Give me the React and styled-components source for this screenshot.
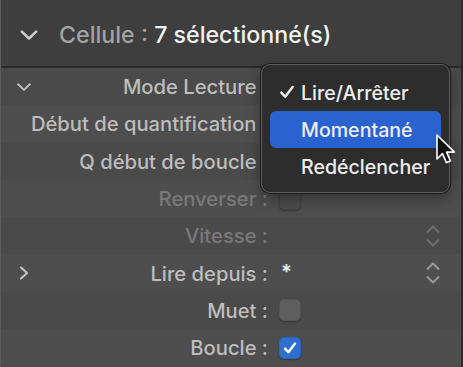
import React from 'react';
import styled, { createGlobalStyle } from 'styled-components';

const GlobalStyle = createGlobalStyle`
  html, body {
    margin: 0;
    padding: 0;
    background: #3e3e3e;
  }
  body {
    font-family: Inter, "Noto Sans", "Liberation Sans", sans-serif;
    -webkit-font-smoothing: antialiased;
  }
`;

const rows = [
  { label: 'Mode Lecture :', chevron: 'down' },
  { label: 'Début de quantification :' },
  { label: 'Q début de boucle :' },
  { label: 'Renverser :', dim: true, control: 'box-dim' },
  { label: 'Vitesse :', dim: true, stepper: true },
  { label: 'Lire depuis :', chevron: 'right', control: 'star', stepper: true },
  { label: 'Muet :', control: 'box' },
  { label: 'Boucle :', control: 'checked' },
];

const ChevronDown = ({ size = 20, color = '#c8c8c8', width = 2.4 }) => (
  <svg width={size} height={size} viewBox="0 0 20 20">
    <path d="M3.5 7 L10 13.2 L16.5 7" fill="none" stroke={color} strokeWidth={width} strokeLinecap="round" strokeLinejoin="round" />
  </svg>
);

const ChevronRight = () => (
  <svg width="14" height="16" viewBox="0 0 14 16">
    <path d="M4 2.5 L10 8 L4 13.5" fill="none" stroke="#c4c4c4" strokeWidth="2.1" strokeLinecap="round" strokeLinejoin="round" />
  </svg>
);

const Stepper = ({ dim }) => (
  <svg width="16" height="26" viewBox="0 0 16 26">
    <g fill="none" stroke={dim ? '#6f6f6f' : '#9a9a9a'} strokeWidth="1.9" strokeLinecap="round" strokeLinejoin="round">
      <path d="M2.5 9 L8 3.5 L13.5 9" />
      <path d="M2.5 17 L8 22.5 L13.5 17" />
    </g>
  </svg>
);

const Check = ({ color = '#fff', size = 16, width = 2.4 }) => (
  <svg width={size} height={size} viewBox="0 0 16 16">
    <path d="M3 8.6 L6.4 12.2 L13 3.6" fill="none" stroke={color} strokeWidth={width} strokeLinecap="round" strokeLinejoin="round" />
  </svg>
);

const Cursor = () => (
  <svg width="24" height="34" viewBox="0 0 24 34">
    <path d="M2 2 L2 26 L7.5 20.6 L11.4 29.6 L15.4 27.9 L11.6 19.1 L19.4 19.1 Z"
      fill="#111" stroke="#fff" strokeWidth="1.6" strokeLinejoin="round" />
  </svg>
);

function Control({ type }) {
  if (type === 'box-dim') return <Box dim />;
  if (type === 'box') return <Box />;
  if (type === 'checked') return <Box checked><Check /></Box>;
  if (type === 'star') return <Star>*</Star>;
  return null;
}

const App = () => (
  <>
    <GlobalStyle />
    <Panel>
      <Header>
        <HeaderChevron><ChevronDown size={22} color="#cfcfcf" width={2.3} /></HeaderChevron>
        <Title>
          <TitleDim>Cellule : </TitleDim>7 sélectionné(s)
        </Title>
      </Header>
      <List>
        {rows.map((r, i) => (
          <Row key={i} odd={i % 2 === 1}>
            <LabelCell>
              <ChevronSlot>
                {r.chevron === 'down' && <ChevronDown size={18} color="#bdbdbd" width={2.2} />}
                {r.chevron === 'right' && <ChevronRight />}
              </ChevronSlot>
              <Label dim={r.dim}>{r.label}</Label>
            </LabelCell>
            <ControlCell>
              <Control type={r.control} />
              {r.stepper && <StepperSlot><Stepper dim={r.dim} /></StepperSlot>}
            </ControlCell>
          </Row>
        ))}
      </List>
      <Menu>
        <MenuItem>
          <MenuCheck><Check color="#ececec" size={18} width={2.2} /></MenuCheck>
          Lire/Arrêter
        </MenuItem>
        <MenuItem active>Momentané</MenuItem>
        <MenuItem>Redéclencher</MenuItem>
      </Menu>
      <CursorWrap><Cursor /></CursorWrap>
    </Panel>
  </>
);

const Panel = styled.div`
  position: relative;
  width: 463px;
  height: 367px;
  overflow: hidden;
  background: #4c4c4c;
  box-sizing: border-box;
  border-left: 1px solid #5c5c5c;
  border-right: 2px solid #2c2c2c;
`;

const Header = styled.div`
  display: flex;
  align-items: center;
  height: 68px;
  background: #3e3e3e;
  border-bottom: 2px solid #2a2a2a;
  box-sizing: border-box;
  padding: 4px 0 0 17px;
`;

const HeaderChevron = styled.div`
  display: flex;
  width: 22px;
  margin-right: 19px;
`;

const Title = styled.div`
  font-size: 23.2px;
  font-weight: 500;
  color: #f2f2f2;
`;

const TitleDim = styled.span`
  color: #a3a3a3;
`;

const List = styled.div`
  display: flex;
  flex-direction: column;
`;

const Row = styled.div`
  display: grid;
  grid-template-columns: 267px 1fr;
  align-items: center;
  height: 37.3px;
  background: ${({ odd }) => (odd ? '#4e4e4e' : '#4a4a4a')};
  box-sizing: border-box;
`;

const LabelCell = styled.div`
  display: flex;
  align-items: center;
  padding-left: 13px;
`;

const ChevronSlot = styled.div`
  display: flex;
  width: 20px;
  justify-content: center;
`;

const Label = styled.div`
  margin-left: auto;
  font-size: 20.2px;
  font-weight: 500;
  color: ${({ dim }) => (dim ? '#797979' : '#bdbdbd')};
  white-space: nowrap;
`;

const ControlCell = styled.div`
  display: flex;
  align-items: center;
  padding-left: 11px;
  padding-right: 20px;
`;

const Box = styled.div`
  display: flex;
  align-items: center;
  justify-content: center;
  width: 22px;
  height: 22px;
  border-radius: 5px;
  box-sizing: border-box;
  background: ${({ checked, dim }) => (checked ? '#2f6fd0' : dim ? '#4c4c4c' : '#5e5e5e')};
  border: 1px solid ${({ checked, dim }) => (checked ? '#2a63bb' : dim ? '#444' : '#555')};
  box-shadow: 0 1px 1.5px rgba(0, 0, 0, 0.3);
`;

const Star = styled.div`
  font-size: 20px;
  font-weight: 600;
  color: #f0f0f0;
  margin-left: 2px;
  margin-top: -2px;
`;

const StepperSlot = styled.div`
  display: flex;
  margin-left: auto;
`;

const Menu = styled.div`
  position: absolute;
  left: 260px;
  top: 64px;
  width: 189px;
  height: 129px;
  box-sizing: border-box;
  padding: 9px 8px 7px 8px;
  background: #2d2d2d;
  border: 1px solid #5e5e5e;
  border-radius: 9px;
  box-shadow: 0 0 0 1px #1c1c1c, 0 6px 14px rgba(0, 0, 0, 0.35);
  display: flex;
  flex-direction: column;
`;

const MenuItem = styled.div`
  position: relative;
  display: flex;
  align-items: center;
  height: 37px;
  padding-left: 31px;
  border-radius: 6px;
  font-size: 19.6px;
  font-weight: 500;
  color: #ededed;
  background: ${({ active }) => (active ? '#2a62cf' : 'transparent')};
`;

const MenuCheck = styled.span`
  position: absolute;
  left: 8px;
  top: 9px;
  display: flex;
`;

const CursorWrap = styled.div`
  position: absolute;
  left: 434px;
  top: 133px;
`;

export default App;
